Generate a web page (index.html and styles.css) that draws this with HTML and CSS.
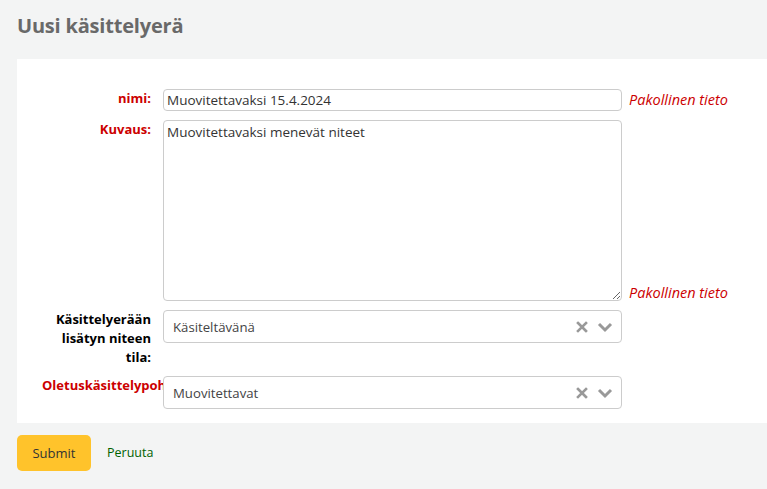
FILE: index.html
```html
<!DOCTYPE html>
<html lang="fi">
<head>
<meta charset="utf-8">
<title>Uusi käsittelyerä</title>
<link rel="stylesheet" href="styles.css">
</head>
<body>
<h1 class="title">Uusi käsittelyerä</h1>
<form class="form">
  <div class="panel">
    <div class="row">
      <label class="lbl required" for="nimi">nimi:</label>
      <input class="input" id="nimi" type="text" value="Muovitettavaksi 15.4.2024">
      <span class="req-note">Pakollinen tieto</span>
    </div>
    <div class="row row-bottom">
      <label class="lbl required" for="kuvaus">Kuvaus:</label>
      <textarea class="textarea" id="kuvaus">Muovitettavaksi menevät niteet</textarea>
      <span class="req-note">Pakollinen tieto</span>
    </div>
    <div class="row">
      <label class="lbl">Käsittelyerään lisätyn niteen tila:</label>
      <div class="select">
        <span class="select-text">Käsiteltävänä</span>
        <svg class="select-x" width="12" height="12" viewBox="0 0 12 12"><path d="M2 2 L10 10 M10 2 L2 10" stroke="#999" stroke-width="2.6" stroke-linecap="square"/></svg>
        <svg class="select-arrow" width="16" height="12" viewBox="0 0 16 12"><path d="M2 3 L8 9 L14 3" fill="none" stroke="#999" stroke-width="3"/></svg>
      </div>
    </div>
    <div class="row">
      <label class="lbl required">Oletuskäsittelypohja</label>
      <div class="select">
        <span class="select-text">Muovitettavat</span>
        <svg class="select-x" width="12" height="12" viewBox="0 0 12 12"><path d="M2 2 L10 10 M10 2 L2 10" stroke="#999" stroke-width="2.6" stroke-linecap="square"/></svg>
        <svg class="select-arrow" width="16" height="12" viewBox="0 0 16 12"><path d="M2 3 L8 9 L14 3" fill="none" stroke="#999" stroke-width="3"/></svg>
      </div>
    </div>
  </div>
  <div class="actions">
    <button class="submit" type="button">Submit</button>
    <a class="cancel" href="#">Peruuta</a>
  </div>
</form>
</body>
</html>
```
FILE: styles.css
```css
html, body {
  margin: 0;
  padding: 0;
  background: #f3f4f4;
  font-family: "Open Sans", "Noto Sans", sans-serif;
  color: #333;
}
.title {
  margin: 0;
  padding: 13px 0 0 17px;
  height: 59px;
  box-sizing: border-box;
  font-size: 20px;
  font-weight: 700;
  line-height: 26px;
  color: #696969;
  letter-spacing: -0.2px;
}
.form {
  margin: 0;
}
.panel {
  margin-left: 17px;
  background: #fff;
  padding: 30px 0 14px 25px;
  display: flex;
  flex-direction: column;
  gap: 9px;
}
.row {
  display: flex;
  align-items: flex-start;
}
.row-bottom {
  align-items: flex-end;
}
.row-bottom .lbl {
  align-self: flex-start;
}
.lbl {
  width: 121px;
  flex: none;
  box-sizing: border-box;
  padding-right: 12px;
  text-align: right;
  font-size: 13px;
  font-weight: 700;
  line-height: 19px;
  color: #000;
  overflow: hidden;
  white-space: normal;
}
.lbl.required {
  color: #c00;
}
.input {
  width: 459px;
  height: 22px;
  box-sizing: border-box;
  border: 1px solid #ccc;
  border-radius: 4px;
  padding: 0 3px;
  font-family: inherit;
  font-size: 13.5px;
  color: #333;
  flex: none;
}
.textarea {
  width: 459px;
  height: 181px;
  box-sizing: border-box;
  border: 1px solid #ccc;
  border-radius: 4px;
  padding: 2px 3px;
  font-family: inherit;
  font-size: 13.5px;
  color: #333;
  flex: none;
  margin: 0;
}
.req-note {
  margin-left: 7px;
  font-size: 14.5px;
  font-style: italic;
  color: #c00;
  line-height: 22px;
}
.row-bottom .req-note {
  line-height: 16px;
}
.select {
  width: 459px;
  height: 33px;
  box-sizing: border-box;
  border: 1px solid #ccc;
  border-radius: 4px;
  background: #fff;
  display: flex;
  align-items: center;
  padding: 0 8px 0 9px;
  flex: none;
}
.select-text {
  flex: 1;
  font-size: 13.2px;
  color: #444;
}
.select-x {
  margin-right: 9px;
}
.actions {
  display: flex;
  align-items: center;
  gap: 16px;
  padding: 12px 0 0 17px;
}
.submit {
  width: 74px;
  height: 36px;
  border: none;
  border-radius: 5px;
  background: #ffc32b;
  font-family: inherit;
  font-size: 13px;
  color: #333;
  padding: 0;
}
.cancel {
  color: #006100;
  font-size: 12.5px;
  text-decoration: none;
  margin-bottom: 2px;
}
```
